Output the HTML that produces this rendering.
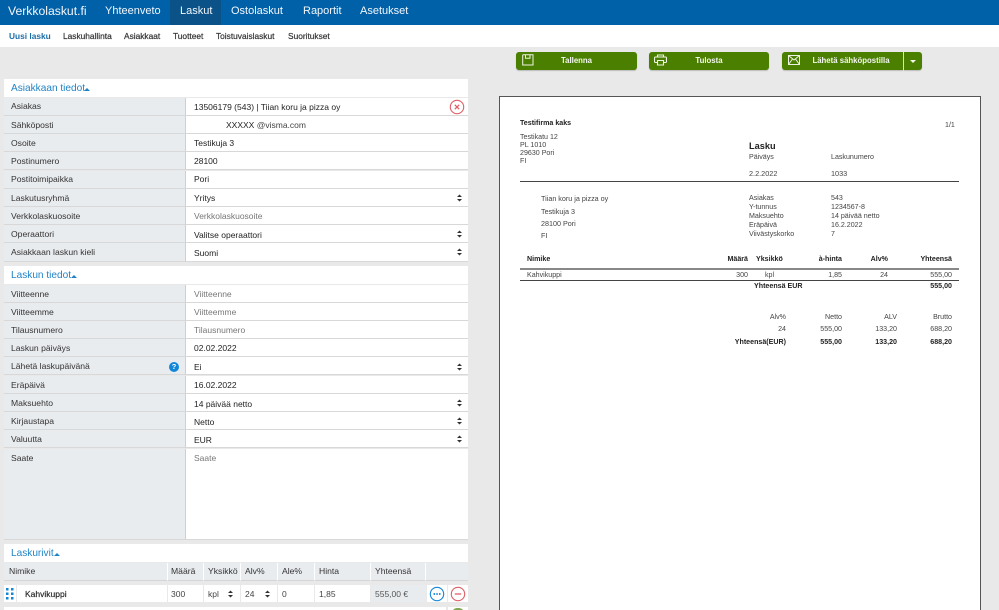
<!DOCTYPE html>
<html><head><meta charset="utf-8"><style>
html,body{margin:0;padding:0;width:999px;height:610px;overflow:hidden}
#w{position:relative;width:999px;height:610px;overflow:hidden;background:#e9e9e9;font-family:"Liberation Sans",Arial,sans-serif;color:#2b3338}
.a{position:absolute;white-space:nowrap}
.nav{top:0;left:0;width:999px;height:25px;background:#0060a8}
.n{top:0;height:25px;line-height:23px;font-size:11px;color:#f2f7fb}
.s{top:30px;font-size:8.350px;line-height:12px;color:#333;-webkit-text-stroke:.2px}
.btn{background:#4b7f00;border-radius:3px;height:18px;top:52px;color:#f4f8ee;font-size:7.800px;font-weight:700;line-height:18px;text-align:center;box-shadow:0 1px 1px #bbb}
.h{left:4px;width:464px;height:18px;background:#fff}
.ht{left:11px;font-size:10.100px;line-height:20px;color:#1f83c6}
.l{left:4px;width:181px;background:#e9ecef;height:17px;border-bottom:1px solid #d8d8d8;border-right:1px solid #cfcfcf}
.v{left:186px;width:282px;background:#fff;height:17px;border-bottom:1px solid #d8d8d8}
.t{font-size:8.600px;line-height:12px;color:#333}
.vt{left:194px;font-size:8.500px;line-height:12px;color:#222}
.ph{color:#777}
.p{font-size:7.100px;line-height:9px;color:#444}
.b{font-weight:700;color:#222}
.r{text-align:right}
.th{top:563px;height:17px;background:#e9ecef;border-right:1px solid #fff;border-bottom:1px solid #d5d5d5}
.td{top:585px;height:17px;background:#fff}
</style></head><body><div id="w">
<div class="a nav"></div>
<div class="a" style="left:170px;top:0;width:51px;height:25px;background:#0a5288"></div>
<div class="a n" style="left:8px;font-size:12.200px">Verkkolaskut.fi</div>
<div class="a n" style="left:105px">Yhteenveto</div>
<div class="a n" style="left:180px">Laskut</div>
<div class="a n" style="left:231px">Ostolaskut</div>
<div class="a n" style="left:303px">Raportit</div>
<div class="a n" style="left:360px">Asetukset</div>
<div class="a" style="left:0;top:25px;width:999px;height:22px;background:#fff"></div>
<div class="a s" style="left:9px;color:#1b6ea8;font-weight:700;-webkit-text-stroke:0">Uusi lasku</div>
<div class="a s" style="left:63px">Laskuhallinta</div>
<div class="a s" style="left:124px">Asiakkaat</div>
<div class="a s" style="left:173px">Tuotteet</div>
<div class="a s" style="left:216px">Toistuvaislaskut</div>
<div class="a s" style="left:288px">Suoritukset</div>

<div class="a btn" style="left:516px;width:121px">Tallenna</div>
<svg class="a" style="left:522px;top:54px" width="12" height="12" viewBox="0 0 12 12" fill="none" stroke="#eef4e4" stroke-width="1"><path d="M.7.700v10.300h10.300V.7H.7M3.500.7v3.500h4.500V.7"/></svg>
<div class="a btn" style="left:649px;width:120px">Tulosta</div>
<svg class="a" style="left:654px;top:54px" width="13" height="12" viewBox="0 0 13 12" fill="none" stroke="#eef4e4" stroke-width="1.100"><path d="M3.500 3V1h6v2M3 8.500H1.500q-1 0-1-1V4q0-1 1-1h10q1 0 1 1v3.500q0 1-1 1H10M3.500 6.500v4.500h6V6.500z"/></svg>
<div class="a btn" style="left:782px;width:121px;text-indent:17px;border-radius:3px 0 0 3px">Lähetä sähköpostilla</div>
<svg class="a" style="left:788px;top:55px" width="12" height="10" viewBox="0 0 12 10" fill="none" stroke="#eef4e4" stroke-width="1"><rect x=".5" y=".5" width="11" height="9"/><path d="M.5.500l5.500 4.500L11.500.5M.5 9.500l4-5.500M11.500 9.500l-4-5.500"/></svg>
<div class="a btn" style="left:904px;width:18px;border-radius:0 3px 3px 0"></div>
<div class="a" style="left:910px;top:60px;border:3px solid transparent;border-top-color:#f4f8ee;border-bottom:0"></div>

<!-- Asiakkaan tiedot -->
<div class="a h" style="top:79px"></div>
<div class="a ht" style="top:79px">Asiakkaan tiedot</div>
<div class="a" style="left:84px;top:88px;border:3px solid transparent;border-bottom-color:#1f83c6;border-top:0"></div>

<div class="a l" style="top:98px"></div><div class="a v" style="top:98px"></div>
<div class="a l" style="top:116px"></div><div class="a v" style="top:116px"></div>
<div class="a l" style="top:134px"></div><div class="a v" style="top:134px"></div>
<div class="a l" style="top:152px"></div><div class="a v" style="top:152px"></div>
<div class="a l" style="top:171px"></div><div class="a v" style="top:171px"></div>
<div class="a l" style="top:189px"></div><div class="a v" style="top:189px"></div>
<div class="a l" style="top:207px"></div><div class="a v" style="top:207px"></div>
<div class="a l" style="top:225px"></div><div class="a v" style="top:225px"></div>
<div class="a l" style="top:243px;height:18px"></div><div class="a v" style="top:243px;height:18px"></div>

<div class="a t" style="left:11px;top:100px">Asiakas</div>
<div class="a t" style="left:11px;top:119px">Sähköposti</div>
<div class="a t" style="left:11px;top:137px">Osoite</div>
<div class="a t" style="left:11px;top:155px">Postinumero</div>
<div class="a t" style="left:11px;top:173px">Postitoimipaikka</div>
<div class="a t" style="left:11px;top:192px">Laskutusryhmä</div>
<div class="a t" style="left:11px;top:210px">Verkkolaskuosoite</div>
<div class="a t" style="left:11px;top:228px">Operaattori</div>
<div class="a t" style="left:11px;top:246px">Asiakkaan laskun kieli</div>

<div class="a vt" style="top:101px">13506179 (543) | Tiian koru ja pizza oy</div>
<div class="a vt" style="left:226px;top:119px">XXXXX <span style="color:#444">@visma.com</span></div>
<div class="a vt" style="top:137px">Testikuja 3</div>
<div class="a vt" style="top:155px">28100</div>
<div class="a vt" style="top:173px">Pori</div>
<div class="a vt" style="top:192px">Yritys</div>
<div class="a vt ph" style="top:210px">Verkkolaskuosoite</div>
<div class="a vt" style="top:229px">Valitse operaattori</div>
<div class="a vt" style="top:247px">Suomi</div>
<svg class="a" style="left:449px;top:99px" width="16" height="16" viewBox="0 0 16 16" fill="none" stroke="#df5f68"><circle cx="8" cy="8" r="6.700" stroke-width="1.100"/><path d="M5.800 5.800l4.400 4.400M10.200 5.800l-4.400 4.400" stroke-width="1.300"/></svg>

<!-- Laskun tiedot -->
<div class="a h" style="top:266px"></div>
<div class="a ht" style="top:266px">Laskun tiedot</div>
<div class="a" style="left:71px;top:275px;border:3px solid transparent;border-bottom-color:#1f83c6;border-top:0"></div>

<div class="a l" style="top:285px"></div><div class="a v" style="top:285px"></div>
<div class="a l" style="top:303px"></div><div class="a v" style="top:303px"></div>
<div class="a l" style="top:321px"></div><div class="a v" style="top:321px"></div>
<div class="a l" style="top:339px"></div><div class="a v" style="top:339px"></div>
<div class="a l" style="top:357px"></div><div class="a v" style="top:357px"></div>
<div class="a l" style="top:376px"></div><div class="a v" style="top:376px"></div>
<div class="a l" style="top:394px"></div><div class="a v" style="top:394px"></div>
<div class="a l" style="top:412px"></div><div class="a v" style="top:412px"></div>
<div class="a l" style="top:430px"></div><div class="a v" style="top:430px"></div>
<div class="a l" style="top:449px;height:90px"></div><div class="a v" style="top:449px;height:90px"></div>

<div class="a t" style="left:11px;top:288px">Viitteenne</div>
<div class="a t" style="left:11px;top:306px">Viitteemme</div>
<div class="a t" style="left:11px;top:324px">Tilausnumero</div>
<div class="a t" style="left:11px;top:342px">Laskun päiväys</div>
<div class="a t" style="left:11px;top:360px">Lähetä laskupäivänä</div>
<div class="a t" style="left:11px;top:379px">Eräpäivä</div>
<div class="a t" style="left:11px;top:397px">Maksuehto</div>
<div class="a t" style="left:11px;top:415px">Kirjaustapa</div>
<div class="a t" style="left:11px;top:433px">Valuutta</div>
<div class="a t" style="left:11px;top:452px">Saate</div>

<div class="a vt ph" style="top:288px">Viitteenne</div>
<div class="a vt ph" style="top:306px">Viitteemme</div>
<div class="a vt ph" style="top:324px">Tilausnumero</div>
<div class="a vt" style="top:342px">02.02.2022</div>
<div class="a vt" style="top:361px">Ei</div>
<div class="a vt" style="top:379px">16.02.2022</div>
<div class="a vt" style="top:398px">14 päivää netto</div>
<div class="a vt" style="top:416px">Netto</div>
<div class="a vt" style="top:434px">EUR</div>
<div class="a vt ph" style="top:452px">Saate</div>
<div class="a" style="left:169px;top:362px;width:10px;height:10px;border-radius:50%;background:#1287d8;color:#fff;font-size:7.500px;font-weight:700;line-height:10px;text-align:center">?</div>

<!-- Laskurivit -->
<div class="a h" style="top:544px"></div>
<div class="a ht" style="top:544px">Laskurivit</div>
<div class="a" style="left:54px;top:553px;border:3px solid transparent;border-bottom-color:#1f83c6;border-top:0"></div>

<div class="a th" style="left:4px;width:163px"></div>
<div class="a th" style="left:168px;width:35px"></div>
<div class="a th" style="left:204px;width:36px"></div>
<div class="a th" style="left:241px;width:36px"></div>
<div class="a th" style="left:278px;width:36px"></div>
<div class="a th" style="left:315px;width:55px"></div>
<div class="a th" style="left:371px;width:54px"></div>
<div class="a th" style="left:426px;width:42px;border-right:0"></div>
<div class="a t" style="left:9px;top:565px">Nimike</div>
<div class="a t" style="left:171px;top:565px">Määrä</div>
<div class="a t" style="left:208px;top:565px">Yksikkö</div>
<div class="a t" style="left:245px;top:565px">Alv%</div>
<div class="a t" style="left:282px;top:565px">Ale%</div>
<div class="a t" style="left:319px;top:565px">Hinta</div>
<div class="a t" style="left:375px;top:565px">Yhteensä</div>

<div class="a td" style="left:4px;width:163px"></div>
<div class="a td" style="left:168px;width:35px"></div>
<div class="a td" style="left:204px;width:36px"></div>
<div class="a td" style="left:241px;width:36px"></div>
<div class="a td" style="left:278px;width:36px"></div>
<div class="a td" style="left:315px;width:55px"></div>
<div class="a td" style="left:371px;width:55px;background:#e9ecef"></div>
<div class="a td" style="left:427px;width:20px"></div>
<div class="a td" style="left:448px;width:20px"></div>
<div class="a" style="left:16px;top:585px;width:1px;height:17px;background:#e9e9e9"></div>
<svg class="a" style="left:6px;top:588px" width="8" height="12" fill="#1287d8"><rect x="0" y="0" width="2.500" height="2.500"/><rect x="5" y="0" width="2.500" height="2.500"/><rect x="0" y="4.500" width="2.500" height="2.500"/><rect x="5" y="4.500" width="2.500" height="2.500"/><rect x="0" y="9" width="2.500" height="2.500"/><rect x="5" y="9" width="2.500" height="2.500"/></svg>
<div class="a vt" style="left:25px;top:588px;-webkit-text-stroke:.15px">Kahvikuppi</div>
<div class="a vt" style="left:171px;top:588px;color:#444">300</div>
<div class="a vt" style="left:208px;top:588px;color:#444">kpl</div>
<div class="a vt" style="left:245px;top:588px;color:#444">24</div>
<div class="a vt" style="left:282px;top:588px;color:#444">0</div>
<div class="a vt" style="left:319px;top:588px;color:#444">1,85</div>
<div class="a vt" style="left:375px;top:588px;color:#555">555,00 €</div>
<svg class="a" style="left:429px;top:586px" width="16" height="16" viewBox="0 0 16 16" fill="none" stroke="#1287d8"><circle cx="8" cy="8" r="6.700" stroke-width="1.100"/><path d="M4.500 8h1.500M7.300 8h1.500M10 8h1.500" stroke-width="1.700"/></svg>
<svg class="a" style="left:450px;top:586px" width="16" height="16" viewBox="0 0 16 16" fill="none" stroke="#df5f68"><circle cx="8" cy="8" r="6.700" stroke-width="1.100"/><path d="M4.800 8h6.400" stroke-width="1.300"/></svg>
<div class="a" style="left:4px;top:607px;width:442px;height:3px;background:#fff"></div>
<div class="a" style="left:448px;top:607px;width:20px;height:3px;background:#fff"></div>
<div class="a" style="left:453px;top:608px;width:10px;height:5px;border-radius:50%;background:#7fa650"></div>

<!-- Select arrows -->
<svg class="a" style="left:0;top:0" width="999" height="610" fill="#333">
<path d="M457 197l2.500-2.500 2.500 2.500zM457 199l2.500 2.500 2.500-2.500z"/>
<path d="M457 233l2.500-2.500 2.500 2.500zM457 235l2.500 2.500 2.500-2.500z"/>
<path d="M457 251l2.500-2.500 2.500 2.500zM457 253l2.500 2.500 2.500-2.500z"/>
<path d="M457 366l2.500-2.500 2.500 2.500zM457 368l2.500 2.500 2.500-2.500z"/>
<path d="M457 402l2.500-2.500 2.500 2.500zM457 404l2.500 2.500 2.500-2.500z"/>
<path d="M457 420l2.500-2.500 2.500 2.500zM457 422l2.500 2.500 2.500-2.500z"/>
<path d="M457 438l2.500-2.500 2.500 2.500zM457 440l2.500 2.500 2.500-2.500z"/>
<path d="M228 593l2.500-2.500 2.500 2.500zM228 595l2.500 2.500 2.500-2.500z"/>
<path d="M265 593l2.500-2.500 2.500 2.500zM265 595l2.500 2.500 2.500-2.500z"/>
</svg>

<!-- Preview -->
<div class="a" style="left:499px;top:96px;background:#fff;border:1px solid #555;box-sizing:border-box;width:482px;height:530px"></div>
<div class="a p b" style="left:520px;top:119px">Testifirma kaks</div>
<div class="a p" style="left:945px;top:121px">1/1</div>
<div class="a p" style="left:520px;top:133px">Testikatu 12</div>
<div class="a p" style="left:520px;top:141px">PL 1010</div>
<div class="a p" style="left:520px;top:149px">29630 Pori</div>
<div class="a p" style="left:520px;top:157px">FI</div>
<div class="a" style="left:749px;top:140px;font-size:9.200px;line-height:12px;font-weight:700;color:#222">Lasku</div>
<div class="a p" style="left:749px;top:153px">Päiväys</div>
<div class="a p" style="left:831px;top:153px">Laskunumero</div>
<div class="a p" style="left:749px;top:169px;font-size:7.300px">2.2.2022</div>
<div class="a p" style="left:831px;top:169px;font-size:7.300px">1033</div>
<div class="a" style="left:520px;top:181px;width:439px;height:1px;background:#444"></div>

<div class="a p" style="left:541px;top:194px;font-size:7.200px">Tiian koru ja pizza oy</div>
<div class="a p" style="left:541px;top:207px;font-size:7.200px">Testikuja 3</div>
<div class="a p" style="left:541px;top:219px;font-size:7.200px">28100 Pori</div>
<div class="a p" style="left:541px;top:231px;font-size:7.200px">FI</div>
<div class="a p" style="left:749px;top:194px">Asiakas</div><div class="a p" style="left:831px;top:194px">543</div>
<div class="a p" style="left:749px;top:203px">Y-tunnus</div><div class="a p" style="left:831px;top:203px">1234567-8</div>
<div class="a p" style="left:749px;top:212px">Maksuehto</div><div class="a p" style="left:831px;top:212px">14 päivää netto</div>
<div class="a p" style="left:749px;top:221px">Eräpäivä</div><div class="a p" style="left:831px;top:221px">16.2.2022</div>
<div class="a p" style="left:749px;top:230px">Viivästyskorko</div><div class="a p" style="left:831px;top:230px">7</div>

<div class="a p b" style="left:527px;top:255px">Nimike</div>
<div class="a p b r" style="right:251px;top:255px">Määrä</div>
<div class="a p b" style="left:756px;top:255px">Yksikkö</div>
<div class="a p b r" style="right:157px;top:255px">à-hinta</div>
<div class="a p b r" style="right:111px;top:255px">Alv%</div>
<div class="a p b r" style="right:47px;top:255px">Yhteensä</div>
<div class="a" style="left:520px;top:268px;width:439px;height:2px;background:#888"></div>
<div class="a p" style="left:527px;top:271px">Kahvikuppi</div>
<div class="a p r" style="right:251px;top:271px">300</div>
<div class="a p" style="left:765px;top:271px">kpl</div>
<div class="a p r" style="right:157px;top:271px">1,85</div>
<div class="a p r" style="right:111px;top:271px">24</div>
<div class="a p r" style="right:47px;top:271px">555,00</div>
<div class="a" style="left:520px;top:280px;width:439px;height:1px;background:#444"></div>
<div class="a p b" style="left:754px;top:282px">Yhteensä EUR</div>
<div class="a p b r" style="right:47px;top:282px">555,00</div>

<div class="a p r" style="right:213px;top:313px">Alv%</div>
<div class="a p r" style="right:157px;top:313px">Netto</div>
<div class="a p r" style="right:102px;top:313px">ALV</div>
<div class="a p r" style="right:47px;top:313px">Brutto</div>
<div class="a p r" style="right:213px;top:325px">24</div>
<div class="a p r" style="right:157px;top:325px">555,00</div>
<div class="a p r" style="right:102px;top:325px">133,20</div>
<div class="a p r" style="right:47px;top:325px">688,20</div>
<div class="a p b r" style="right:213px;top:338px">Yhteensä(EUR)</div>
<div class="a p b r" style="right:157px;top:338px">555,00</div>
<div class="a p b r" style="right:102px;top:338px">133,20</div>
<div class="a p b r" style="right:47px;top:338px">688,20</div>
</div></body></html>
